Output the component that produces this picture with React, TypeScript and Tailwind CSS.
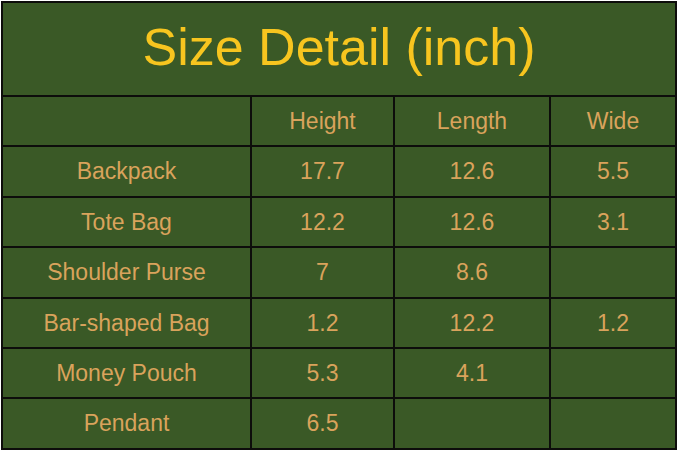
const headers = ["", "Height", "Length", "Wide"];

const rows = [
  ["Backpack", "17.7", "12.6", "5.5"],
  ["Tote Bag", "12.2", "12.6", "3.1"],
  ["Shoulder Purse", "7", "8.6", ""],
  ["Bar-shaped Bag", "1.2", "12.2", "1.2"],
  ["Money Pouch", "5.3", "4.1", ""],
  ["Pendant", "6.5", "", ""],
];

export default function App() {
  return (
    <div className="w-[679px] h-[452px] bg-white pt-[1px] pl-[1px]" style={{ fontFamily: '"Liberation Sans", Arial, sans-serif' }}>
      <div className="grid w-[676px] bg-[#0d0d0b] p-[2px] gap-[2px] grid-cols-[247px_141px_154px_124px] grid-rows-[92px_repeat(7,48.4px)]">
        <div className="col-span-4 bg-[#3a5926] flex items-center justify-center pb-[4px] text-[52px] leading-none text-[#f7c51f]">
          Size Detail (inch)
        </div>
        {headers.map((h, i) => (
          <div key={"h" + i} className="bg-[#3a5926] flex items-center justify-center text-[23px] text-[#d9a35c]">
            {h}
          </div>
        ))}
        {rows.map((row, r) =>
          row.map((cell, c) => (
            <div key={r + "-" + c} className="bg-[#3a5926] flex items-center justify-center text-[23px] text-[#d9a35c]">
              {cell}
            </div>
          ))
        )}
      </div>
    </div>
  );
}
